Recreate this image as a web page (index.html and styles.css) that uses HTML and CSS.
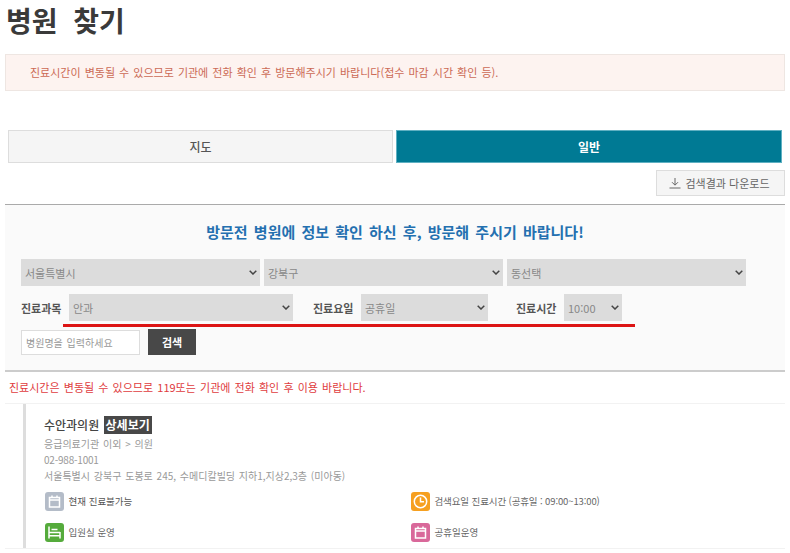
FILE: index.html
```html
<!DOCTYPE html>
<html lang="ko">
<head>
<meta charset="utf-8">
<title>병원 찾기</title>
<link rel="stylesheet" href="styles.css">
</head>
<body>
<h1 class="title">병원 찾기</h1>
<p class="alert">진료시간이 변동될 수 있으므로 기관에 전화 확인 후 방문해주시기 바랍니다(접수 마감 시간 확인 등).</p>
<div class="tabs">
  <a class="tab">지도</a>
  <a class="tab tab-on">일반</a>
</div>
<div class="tools">
  <button class="dl">
    <svg class="dl-icon" viewBox="0 0 12 12" width="12" height="12"><path d="M6 1v7M3 5.200 6 8.200 9 5.200M.5 11h11" fill="none" stroke="#666" stroke-width="1"/></svg>
    검색결과 다운로드
  </button>
</div>
<section class="panel">
  <h2 class="panel-head">방문전 병원에 정보 확인 하신 후, 방문해 주시기 바랍니다!</h2>
  <div class="row row-1">
    <select class="sel sel-region"><option>서울특별시</option></select>
    <select class="sel sel-region"><option>강북구</option></select>
    <select class="sel sel-region"><option>동선택</option></select>
  </div>
  <div class="row row-2">
    <label class="lbl">진료과목</label>
    <select class="sel sel-dept"><option>안과</option></select>
    <label class="lbl lbl-day">진료요일</label>
    <select class="sel sel-day"><option>공휴일</option></select>
    <label class="lbl lbl-time">진료시간</label>
    <select class="sel sel-time"><option>10:00</option></select>
  </div>
  <div class="row row-3">
    <input class="name" type="text" placeholder="병원명을 입력하세요">
    <button class="go">검색</button>
  </div>
  <div class="redline"></div>
</section>
<p class="notice">진료시간은 변동될 수 있으므로 119또는 기관에 전화 확인 후 이용 바랍니다.</p>
<article class="card">
  <div class="card-in">
    <div class="card-title">수안과의원 <span class="more">상세보기</span></div>
    <div class="meta meta-first">응급의료기관 이외 &gt; 의원</div>
    <div class="meta meta-phone">02-988-1001</div>
    <div class="meta">서울특별시 강북구 도봉로 245, 수메디칼빌딩 지하1,지상2,3층 (미아동)</div>
    <div class="facts">
      <div class="fact">
        <span class="ico ico-grey"><svg viewBox="0 0 19 19" width="19" height="19"><path d="M4.500 5.500h10v9.500h-10zM4.500 8h10M7 3.500v2M12 3.500v2" fill="none" stroke="#fff" stroke-width="1.500"/></svg></span>
        <span class="fact-text fact-dark">현재 진료불가능</span>
      </div>
      <div class="fact">
        <span class="ico ico-orange"><svg viewBox="0 0 19 19" width="19" height="19"><circle cx="9.500" cy="9.500" r="6.200" fill="none" stroke="#fff" stroke-width="1.500"/><path d="M9.500 5.500v4.200h3.500" fill="none" stroke="#fff" stroke-width="1.500"/></svg></span>
        <span class="fact-text fact-time">검색요일 진료시간 (공휴일 : 09:00~13:00)</span>
      </div>
      <div class="fact">
        <span class="ico ico-green"><svg viewBox="0 0 19 19" width="19" height="19"><path d="M4 3.500v12M15 9v6.500M4 9.500h11M4 12.800h11M6.500 6.500h6" fill="none" stroke="#fff" stroke-width="1.500"/></svg></span>
        <span class="fact-text">입원실 운영</span>
      </div>
      <div class="fact">
        <span class="ico ico-pink"><svg viewBox="0 0 19 19" width="19" height="19"><path d="M4.500 5.500h10v9.500h-10zM4.500 8h10M7 3.500v2M12 3.500v2" fill="none" stroke="#fff" stroke-width="1.500"/></svg></span>
        <span class="fact-text">공휴일운영</span>
      </div>
    </div>
  </div>
</article>
</body>
</html>
```
FILE: styles.css
```css
* { box-sizing: border-box; }
html, body { margin: 0; padding: 0; }
body {
  width: 790px;
  height: 553px;
  overflow: hidden;
  background: #fff;
  font-family: "Noto Sans CJK KR", "Noto Sans", sans-serif;
  color: #333;
}
.title {
  margin: 0;
  padding-left: 6px;
  height: 54px;
  font-size: 28px;
  line-height: 41px;
  word-spacing: 8px;
  font-weight: 700;
  color: #3a3a3a;
}
.alert {
  margin: 0 5px;
  height: 37px;
  padding-left: 24px;
  background: #fdf3f0;
  border: 1px solid #eee6e2;
  font-size: 11px;
  line-height: 35px;
  word-spacing: 1px;
  color: #cc6a55;
}
.tabs {
  display: grid;
  grid-template-columns: 385px 386px;
  gap: 3px;
  margin: 39px 8px 0;
  height: 33px;
}
.tab {
  text-align: center;
  font-size: 12px;
  font-weight: 500;
  line-height: 31px;
  background: #f5f5f5;
  border: 1px solid #ddd;
  color: #555;
}
.tab-on {
  background: #007a94;
  border-color: #5fb0c2;
  color: #fff;
  font-weight: 700;
}
.tools {
  display: flex;
  justify-content: flex-end;
  margin: 7px 5px 0;
}
.dl {
  display: flex;
  align-items: center;
  justify-content: center;
  gap: 4px;
  width: 129px;
  height: 26px;
  padding: 0 2px 0 0;
  background: #f5f5f5;
  border: 1px solid #ddd;
  font-family: inherit;
  font-size: 11px;
  color: #666;
}
.panel {
  position: relative;
  margin: 8px 5px 0;
  height: 168px;
  background: #fafafa;
  border-top: 1px solid #aaa;
  border-bottom: 2px solid #ccc;
  padding: 0 16px;
}
.panel-head {
  margin: 0;
  padding-top: 16px;
  height: 54px;
  text-align: center;
  font-size: 15px;
  line-height: 22px;
  word-spacing: 2px;
  font-weight: 700;
  color: #2470b0;
}
.row { display: flex; align-items: center; }
.row-1 { gap: 4px; }
.row-2 { margin-top: 8px; }
.row-3 { margin-top: 8px; }
.sel {
  appearance: none;
  height: 27px;
  border: 0;
  border-radius: 0;
  padding: 0 0 0 4px;
  background-color: #dcdcdc;
  background-image: url("data:image/svg+xml,%3Csvg xmlns='http://www.w3.org/2000/svg' width='8' height='5'%3E%3Cpath d='M.7.7 4 4l3.300-3.300' fill='none' stroke='%23444' stroke-width='1.500'/%3E%3C/svg%3E");
  background-repeat: no-repeat;
  background-position: right 3px center;
  font-family: inherit;
  font-size: 11px;
  color: #888;
}
.sel-region { width: 239px; }
.sel-dept { width: 224px; }
.sel-day { width: 127px; }
.sel-time { width: 58px; }
.lbl {
  width: 48px;
  font-size: 11px;
  font-weight: 700;
  color: #555;
}
.lbl-day { margin-left: 20px; }
.lbl-time { margin-left: 28px; }
.name {
  width: 119px;
  height: 25px;
  padding: 0 4px;
  background: #fff;
  border: 1px solid #ddd;
  font-family: inherit;
  font-size: 10px;
  word-spacing: 1px;
}
.name::placeholder { color: #999; }
.go {
  width: 48px;
  height: 26px;
  margin-left: 8px;
  padding: 0;
  background: #484848;
  border: 0;
  color: #fff;
  font-family: inherit;
  font-size: 11px;
  font-weight: 700;
}
.redline {
  position: absolute;
  left: 58px;
  top: 119px;
  width: 572px;
  height: 3px;
  background: #dc1414;
}
.notice {
  margin: 0;
  padding: 7px 0 0 9px;
  height: 31px;
  font-size: 11px;
  line-height: 17px;
  word-spacing: 1.100px;
  color: #e03c40;
}
.card {
  margin: 0 5px;
  height: 146px;
  padding-left: 18px;
  border-top: 1px solid #f2f2f2;
  border-bottom: 1px solid #f2f2f2;
}
.card-in {
  height: 100%;
  padding: 12px 0 0 18px;
  border-left: 3px solid #ddd;
}
.card-title {
  font-size: 12px;
  line-height: 18px;
  font-weight: 500;
  word-spacing: 1px;
  color: #444;
}
.more {
  display: inline-block;
  padding: 0 2px;
  background: #484848;
  color: #fff;
  font-weight: 700;
}
.meta {
  font-size: 10px;
  line-height: 16px;
  word-spacing: 1px;
  color: #999;
}
.meta-first { margin-top: 2px; }
.meta-phone { letter-spacing: -0.2px; }
.facts {
  display: grid;
  grid-template-columns: 366px 1fr;
  row-gap: 12px;
  margin: 8px 0 0 1px;
  font-size: 9.500px;
  color: #666;
}
.fact {
  display: flex;
  align-items: center;
  gap: 4.500px;
  height: 19px;
}
.fact-text { padding-bottom: 2px; }
.fact-dark { color: #555; }
.fact-time { letter-spacing: -0.12px; }
.ico {
  display: block;
  width: 19px;
  height: 19px;
  border-radius: 3px;
  overflow: hidden;
}
.ico svg { display: block; }
.ico-grey { background: #b4bcc8; }
.ico-orange { background: #f6a020; }
.ico-green { background: #55ab3c; }
.ico-pink { background: #d9689a; }
```
